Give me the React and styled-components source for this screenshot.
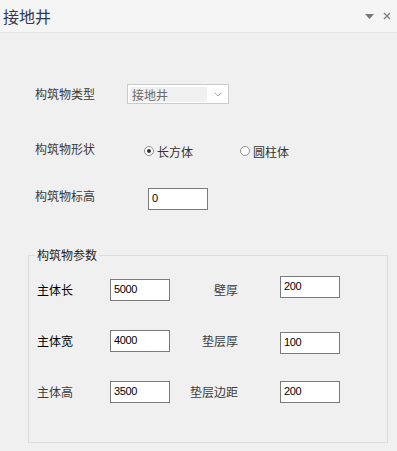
import React from "react";
import styled, { createGlobalStyle } from "styled-components";

const Global = createGlobalStyle`
  html, body {
    margin: 0;
    padding: 0;
    background: #f0f0f0;
  }
  body {
    font-family: "Noto Sans CJK SC", "Liberation Sans", sans-serif;
    font-size: 12px;
    color: #333;
  }
`;

const Panel = styled.div`
  width: 397px;
  height: 451px;
  overflow: hidden;
  background: #f0f0f0;
`;

const TitleBar = styled.div`
  height: 32px;
  background: #f5f5f5;
  border-bottom: 1px solid #e4e4e4;
  display: flex;
  align-items: center;
  padding: 0 6px 0 3px;
`;

const Title = styled.div`
  flex: 1;
  font-size: 16px;
  color: #2f3b4d;
  line-height: 32px;
`;

const TitleIcons = styled.div`
  display: flex;
  align-items: center;
  gap: 9px;
  color: #7a7a7a;
`;

const Body = styled.div`
  padding: 51px 0 0 35px;
  display: flex;
  flex-direction: column;
`;

const Row = styled.div`
  display: flex;
  align-items: center;
  height: ${(p) => p.$h || 20}px;
  margin-top: ${(p) => p.$mt || 0}px;
`;

const Label = styled.div`
  width: ${(p) => p.$w || 92}px;
  line-height: 14px;
  color: #3a3a3a;
  margin-top: ${(p) => p.$dy || 0}px;
`;

const Combo = styled.div`
  width: 98px;
  height: 18px;
  border: 1px solid #cbcbcb;
  background: #fff;
  display: flex;
  align-items: center;
  padding-left: 2px;
`;

const ComboText = styled.div`
  width: 75px;
  height: 15px;
  line-height: 15px;
  background: #f0f0f0;
  color: #6a6a6a;
  padding-left: 2px;
`;

const Chevron = styled.svg`
  margin-left: 7px;
`;

const Radios = styled.div`
  display: flex;
  align-items: center;
  margin-top: 2px;
  margin-left: 17px;
`;

const RadioItem = styled.div`
  display: flex;
  align-items: center;
  width: ${(p) => p.$w || "auto"};
  color: #333;
`;

const RadioDot = styled.span`
  width: 10px;
  height: 10px;
  box-sizing: border-box;
  border-radius: 50%;
  border: 1px solid #8f8f8f;
  background: #fff;
  margin-right: 3px;
  display: flex;
  align-items: center;
  justify-content: center;
  &::after {
    content: "";
    width: 4px;
    height: 4px;
    border-radius: 50%;
    background: ${(p) => (p.$on ? "#333" : "transparent")};
  }
`;

const Input = styled.div`
  box-sizing: border-box;
  width: 60px;
  height: 22px;
  border: 1px solid #7a7a7a;
  background: #fff;
  padding: 3px 0 0 3px;
  font-family: "Liberation Sans", sans-serif;
  font-size: 11px;
  letter-spacing: -0.4px;
  color: #000;
  margin-top: ${(p) => p.$dy || 0}px;
  margin-left: ${(p) => p.$ml || 0}px;
`;

const Group = styled.div`
  position: relative;
  margin: 45px 0 0 -7px;
  width: 360px;
  height: 188px;
  border: 1px solid #dcdcdc;
  padding: 23px 0 0 8px;
  box-sizing: border-box;
`;

const Legend = styled.div`
  position: absolute;
  top: -8px;
  left: 6px;
  padding: 0 2px;
  background: #f0f0f0;
  color: #1c1c1c;
  line-height: 14px;
`;

const ParamGrid = styled.div`
  display: grid;
  grid-template-columns: 73px 60px 68px 42px 60px;
  grid-auto-rows: 22px;
  row-gap: 29px;
  align-items: center;
`;

const ParamLabel = styled.div`
  color: ${(p) => (p.$dark ? "#000" : "#3c3c3c")};
  text-align: ${(p) => (p.$right ? "right" : "left")};
  line-height: 14px;
  margin-top: ${(p) => p.$dy || 0}px;
`;

const params = [
  { l: "主体长", a: "5000", r: "壁厚", b: "200", dark: true, bdy: -6 },
  { l: "主体宽", a: "4000", r: "垫层厚", b: "100", dark: true, bdy: 4 },
  { l: "主体高", a: "3500", r: "垫层边距", b: "200", dark: false, bdy: 0 },
];

const App = () => (
  <Panel>
    <Global />
    <TitleBar>
      <Title>接地井</Title>
      <TitleIcons>
        <svg width="9" height="5" viewBox="0 0 9 5">
          <path d="M0 0 H9 L4.5 5 Z" fill="#777" />
        </svg>
        <svg width="8" height="8" viewBox="0 0 8 8">
          <path d="M1 1 L7 7 M7 1 L1 7" stroke="#808080" strokeWidth="1.4" />
        </svg>
      </TitleIcons>
    </TitleBar>
    <Body>
      <Row>
        <Label>构筑物类型</Label>
        <Combo>
          <ComboText>接地井</ComboText>
          <Chevron width="8" height="5" viewBox="0 0 8 5">
            <path d="M0.5 0.5 L4 4 L7.5 0.5" fill="none" stroke="#a8a8a8" strokeWidth="1" />
          </Chevron>
        </Combo>
      </Row>
      <Row $mt={36}>
        <Label $dy={-3}>构筑物形状</Label>
        <Radios>
          <RadioItem $w="96px">
            <RadioDot $on />
            长方体
          </RadioItem>
          <RadioItem>
            <RadioDot />
            圆柱体
          </RadioItem>
        </Radios>
      </Row>
      <Row $mt={28} $h={22}>
        <Label $dy={-6}>构筑物标高</Label>
        <Input $ml={21}>0</Input>
      </Row>
      <Group>
        <Legend>构筑物参数</Legend>
        <ParamGrid>
          {params.map((p) => (
            <React.Fragment key={p.l}>
              <ParamLabel $dark={p.dark}>{p.l}</ParamLabel>
              <Input>{p.a}</Input>
              <ParamLabel $right>{p.r}</ParamLabel>
              <span />
              <Input $dy={p.bdy}>{p.b}</Input>
            </React.Fragment>
          ))}
        </ParamGrid>
      </Group>
    </Body>
  </Panel>
);

export default App;
